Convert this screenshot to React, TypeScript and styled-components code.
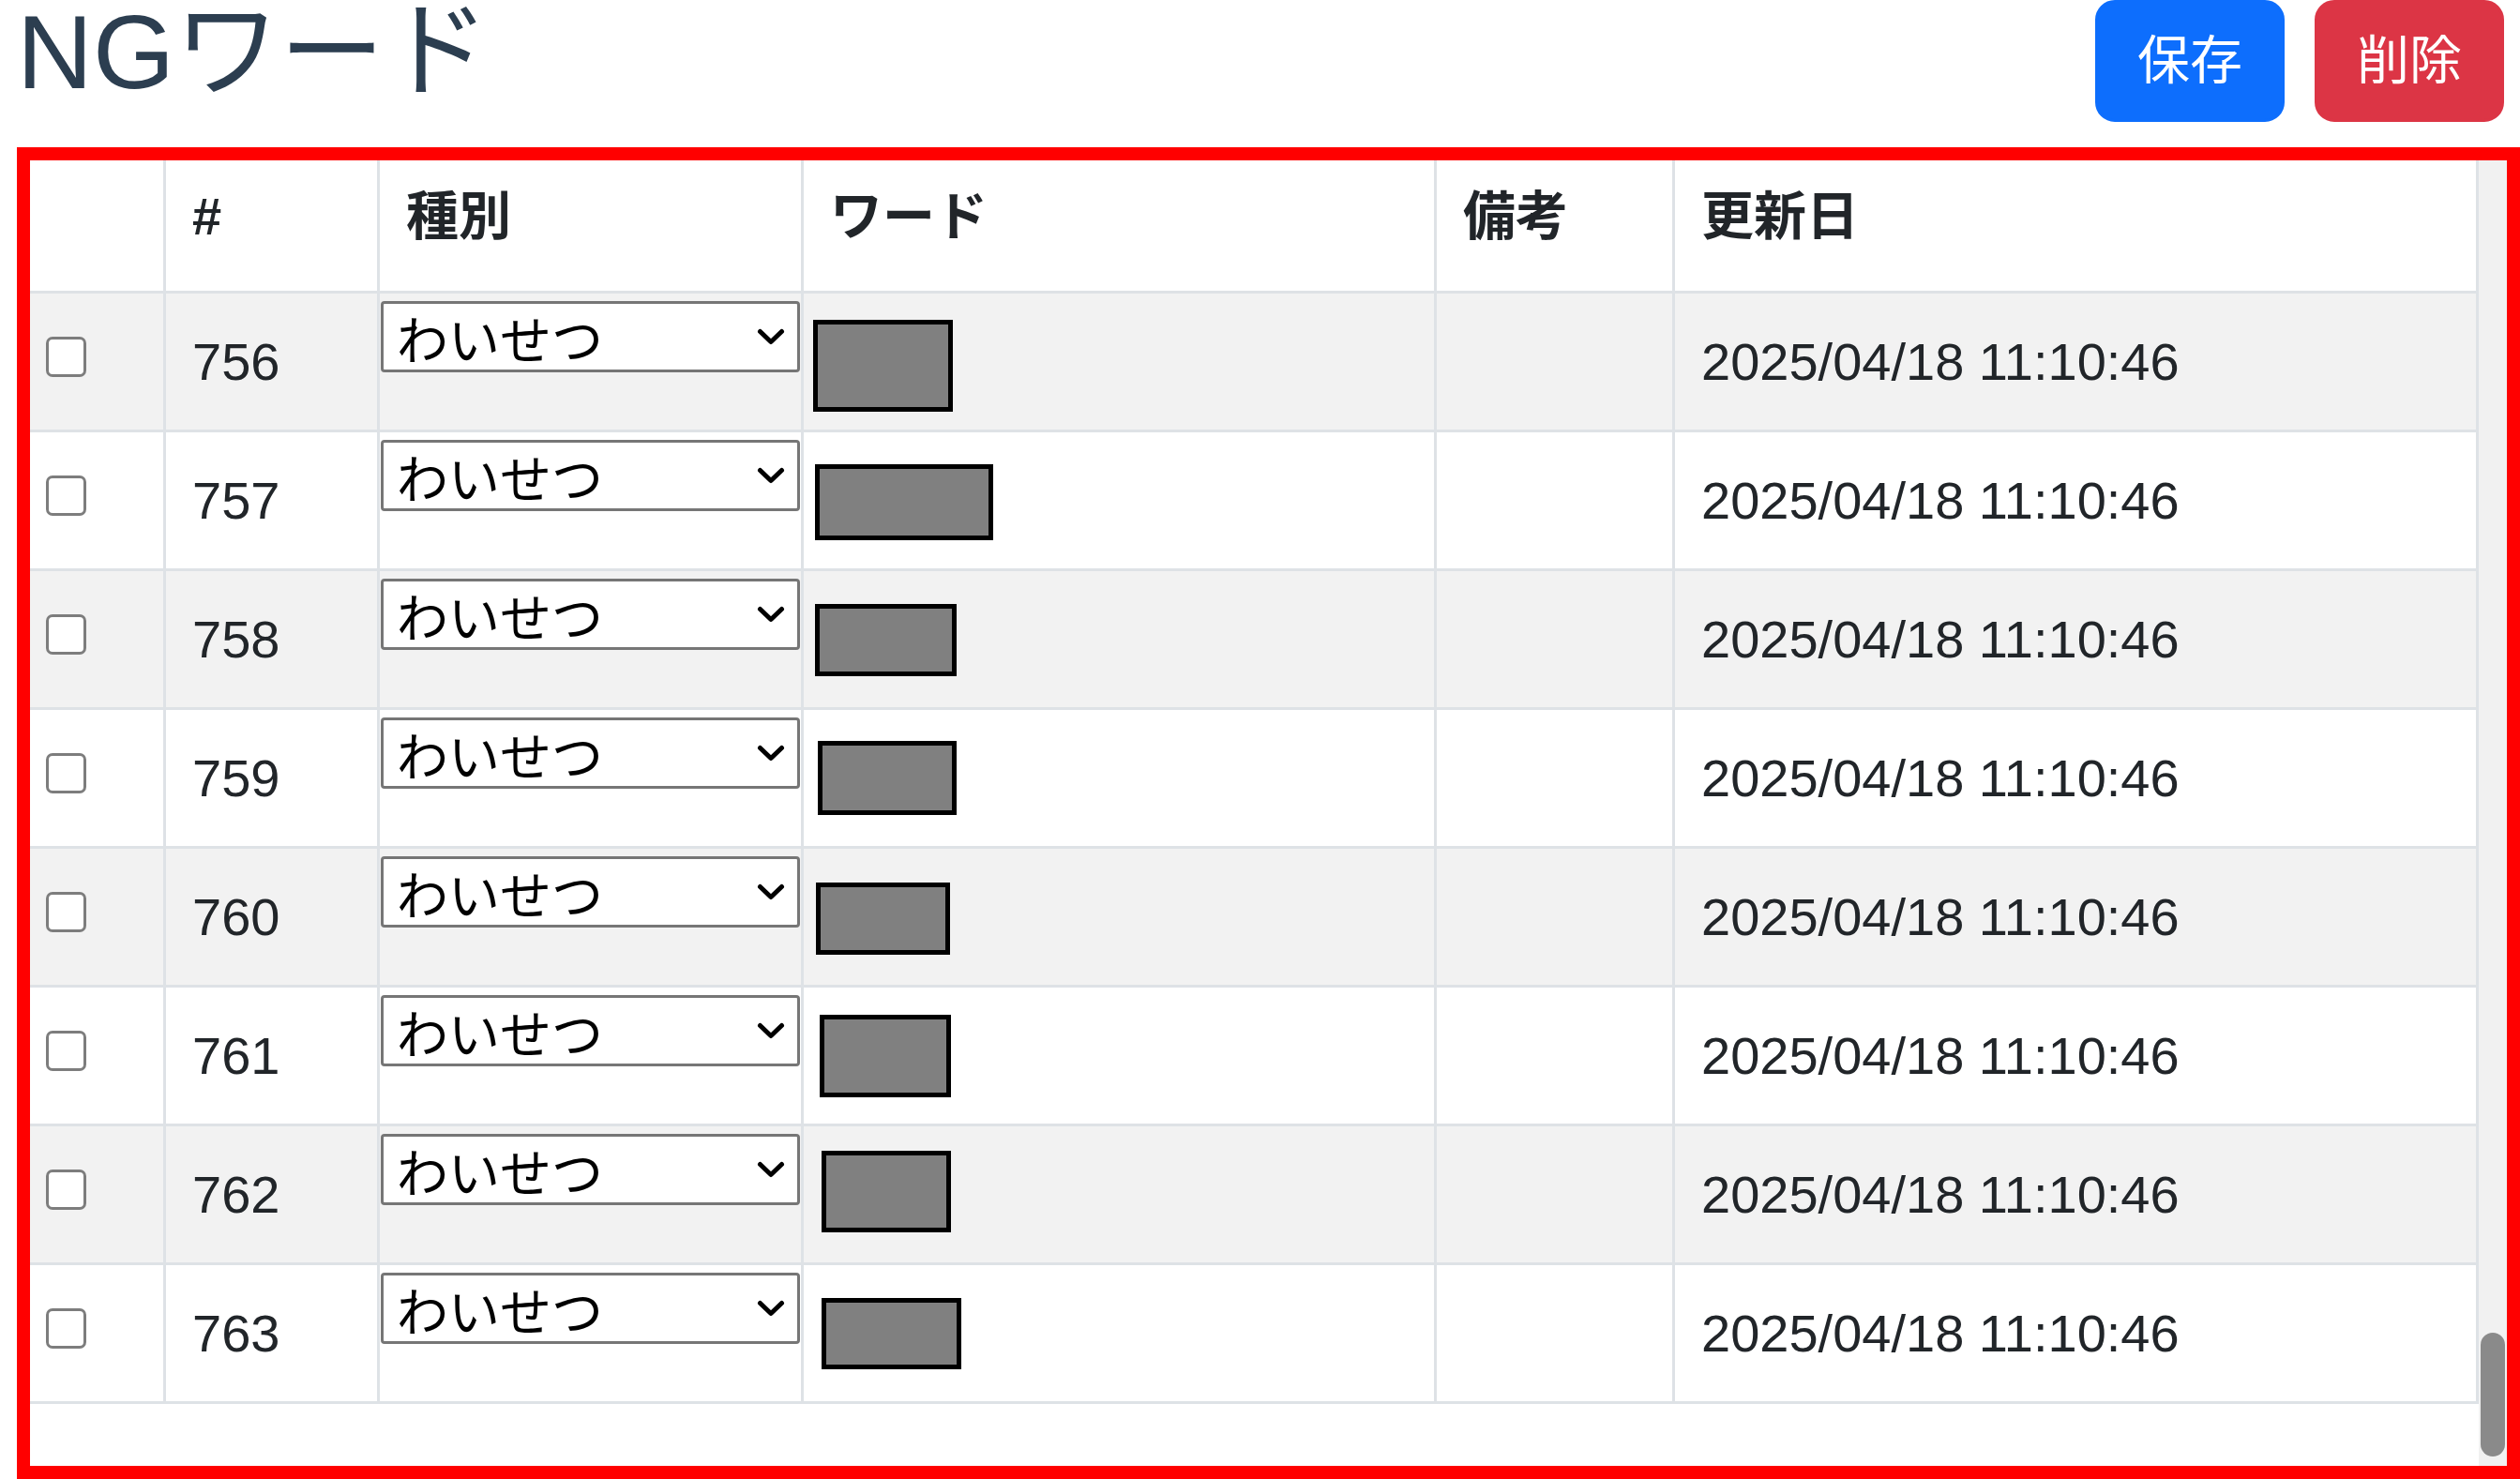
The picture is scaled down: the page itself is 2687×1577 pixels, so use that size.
import React from "react";
import styled, { createGlobalStyle } from "styled-components";

const GlobalStyle = createGlobalStyle`
  html, body { margin: 0; padding: 0; background: #ffffff; }
  body {
    font-family: "Liberation Sans", "Noto Sans CJK JP", sans-serif;
    color: #212529;
  }
  *, *::before, *::after { box-sizing: border-box; }
`;

const Page = styled.div`
  width: 2687px;
  height: 1577px;
  padding-left: 18px;
  display: flex;
  flex-direction: column;
  overflow: hidden;
`;

const Header = styled.header`
  flex: none;
  display: flex;
  justify-content: space-between;
  align-items: flex-start;
  height: 130px;
  margin-bottom: 27px;
  padding-right: 17px;
`;

const Title = styled.h1`
  margin: 0;
  font-family: "Liberation Sans", "Noto Sans CJK JP", sans-serif;
  font-size: 112px;
  line-height: 112px;
  font-weight: 400;
  color: #2c3e50;
`;

const Actions = styled.div`
  display: flex;
  gap: 32px;
`;

const ActionButton = styled.button<{ $variant: "primary" | "danger" }>`
  height: 130px;
  padding: 0 42px;
  border: 3px solid ${(p) => (p.$variant === "primary" ? "#0d6efd" : "#dc3545")};
  background: ${(p) => (p.$variant === "primary" ? "#0d6efd" : "#dc3545")};
  color: #ffffff;
  border-radius: 21px;
  font-family: "Liberation Sans", "Noto Sans CJK JP", sans-serif;
  font-size: 56px;
  line-height: 124px;
  font-weight: 400;
  cursor: pointer;
`;

const Frame = styled.div`
  flex: 1;
  min-height: 0;
  display: flex;
  border: 14px solid #ff0000;
`;

const ScrollArea = styled.div`
  flex: 1;
  min-width: 0;
  overflow: hidden;
  padding-bottom: 66px;
`;

const ScrollTrack = styled.div`
  flex: none;
  width: 30px;
  display: flex;
  flex-direction: column;
  justify-content: flex-end;
  padding: 0 2px 10px;
  background: #f1f1f1;
`;

const ScrollThumb = styled.div`
  height: 132px;
  border-radius: 13px;
  background: #8a8a8a;
`;

const Table = styled.table`
  width: 100%;
  table-layout: fixed;
  border-collapse: separate;
  border-spacing: 0;
  font-size: 56px;
  line-height: 84px;
  color: #212529;
`;

const HeadCell = styled.th`
  background: #ffffff;
  text-align: left;
  font-weight: 700;
  vertical-align: top;
  padding: 18px 28px 37px;
  border-right: 3px solid #dee2e6;
  border-bottom: 3px solid #dee2e6;
  white-space: nowrap;
`;

const Row = styled.tr<{ $striped: boolean }>`
  height: 148px;
  background: ${(p) => (p.$striped ? "#f2f2f2" : "#ffffff")};
`;

const Cell = styled.td`
  padding: 0 28px;
  vertical-align: middle;
  border-right: 3px solid #dee2e6;
  border-bottom: 3px solid #dee2e6;
  white-space: nowrap;
`;

const CheckCell = styled(Cell)`
  padding: 0 0 10px 17px;
`;

const TypeCell = styled(Cell)`
  vertical-align: top;
  padding: 8px 1px 0;
`;

const WordCell = styled(Cell)`
  padding: 0;
`;

const Check = styled.input.attrs({ type: "checkbox" })`
  appearance: none;
  -webkit-appearance: none;
  display: block;
  width: 43px;
  height: 43px;
  margin: 0;
  border: 3px solid #7d7d7d;
  border-radius: 7px;
  background: #ffffff;
`;

const SelectWrap = styled.div`
  position: relative;
`;

const TypeSelect = styled.select`
  appearance: none;
  -webkit-appearance: none;
  display: block;
  width: 100%;
  height: 76px;
  margin: 0;
  padding: 0 70px 0 14px;
  border: 3px solid #767676;
  border-radius: 4px;
  background: #ffffff;
  color: #000000;
  font-family: "Noto Sans CJK JP", sans-serif;
  font-size: 55px;
  line-height: 70px;
`;

const Chevron = styled.svg`
  position: absolute;
  right: 16px;
  top: 29px;
  width: 30px;
  height: 18px;
  pointer-events: none;
`;

const Redaction = styled.span<{ $w: number; $h: number; $x: number; $dy: number }>`
  display: block;
  width: ${(p) => p.$w}px;
  height: ${(p) => p.$h}px;
  margin-left: ${(p) => p.$x}px;
  margin-top: ${(p) => p.$dy * 2}px;
  background: #808080;
  border: 5px solid #000000;
`;

type Box = { w: number; h: number; x: number; dy: number };

const boxes: Record<number, Box> = {
  756: { w: 149, h: 98, x: 10, dy: 4 },
  757: { w: 190, h: 81, x: 12, dy: 2 },
  758: { w: 151, h: 77, x: 12, dy: 1 },
  759: { w: 148, h: 79, x: 15, dy: 0 },
  760: { w: 143, h: 77, x: 13, dy: 2 },
  761: { w: 140, h: 88, x: 17, dy: 0 },
  762: { w: 138, h: 87, x: 19, dy: -3 },
  763: { w: 149, h: 76, x: 19, dy: 0 },
};

const rows = Array.from({ length: 8 }, (_, i) => {
  const id = 756 + i;
  return {
    id,
    type: "わいせつ",
    box: boxes[id],
    note: "",
    updated: "2025/04/18 11:10:46",
  };
});

const colWidths = [145, 228, 452, 675, 254];

export default function App() {
  return (
    <>
      <GlobalStyle />
      <Page>
        <Header>
          <Title>NGワード</Title>
          <Actions>
            <ActionButton $variant="primary">保存</ActionButton>
            <ActionButton $variant="danger">削除</ActionButton>
          </Actions>
        </Header>
        <Frame>
          <ScrollArea>
            <Table>
              <colgroup>
                {colWidths.map((w, i) => (
                  <col key={i} style={{ width: w }} />
                ))}
                <col />
              </colgroup>
              <thead>
                <tr>
                  <HeadCell />
                  <HeadCell>#</HeadCell>
                  <HeadCell>種別</HeadCell>
                  <HeadCell>ワード</HeadCell>
                  <HeadCell>備考</HeadCell>
                  <HeadCell>更新日</HeadCell>
                </tr>
              </thead>
              <tbody>
                {rows.map((r) => (
                  <Row key={r.id} $striped={r.id % 2 === 0}>
                    <CheckCell>
                      <Check />
                    </CheckCell>
                    <Cell>{r.id}</Cell>
                    <TypeCell>
                      <SelectWrap>
                        <TypeSelect defaultValue={r.type}>
                          <option value="わいせつ">わいせつ</option>
                          <option value="暴力">暴力</option>
                          <option value="差別">差別</option>
                        </TypeSelect>
                        <Chevron viewBox="0 0 30 18">
                          <path
                            d="M3.5 3.5 L15 14.5 L26.5 3.5"
                            fill="none"
                            stroke="#000"
                            strokeWidth="5"
                            strokeLinecap="round"
                            strokeLinejoin="round"
                          />
                        </Chevron>
                      </SelectWrap>
                    </TypeCell>
                    <WordCell>
                      <Redaction $w={r.box.w} $h={r.box.h} $x={r.box.x} $dy={r.box.dy} />
                    </WordCell>
                    <Cell>{r.note}</Cell>
                    <Cell>{r.updated}</Cell>
                  </Row>
                ))}
              </tbody>
            </Table>
          </ScrollArea>
          <ScrollTrack>
            <ScrollThumb />
          </ScrollTrack>
        </Frame>
      </Page>
    </>
  );
}
